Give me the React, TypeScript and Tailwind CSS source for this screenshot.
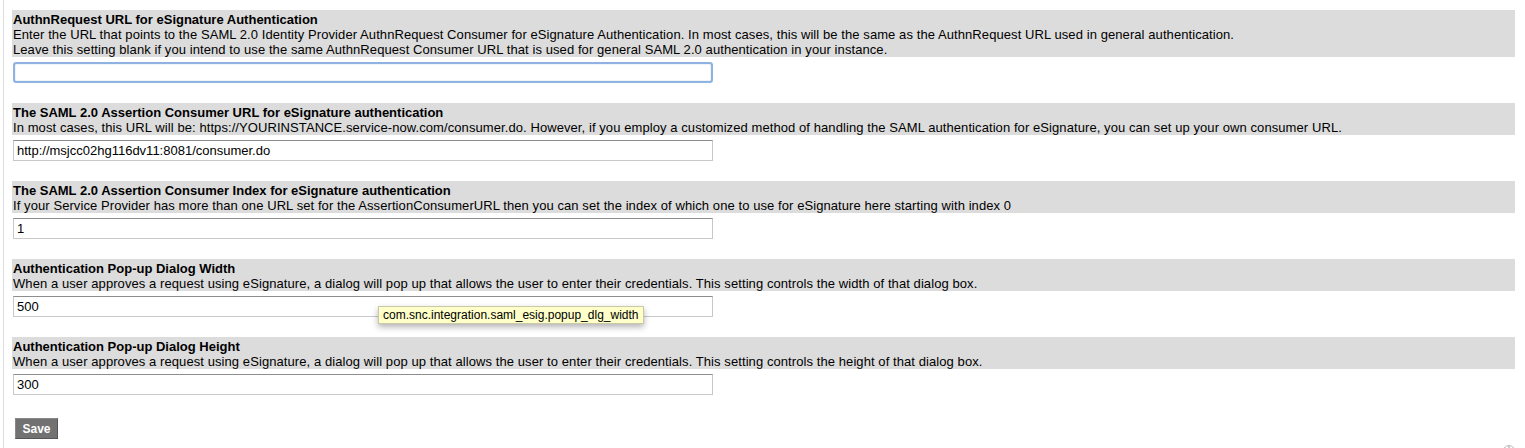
const settings = [
  {
    title: "AuthnRequest URL for eSignature Authentication",
    desc: [
      "Enter the URL that points to the SAML 2.0 Identity Provider AuthnRequest Consumer for eSignature Authentication. In most cases, this will be the same as the AuthnRequest URL used in general authentication.",
      "Leave this setting blank if you intend to use the same AuthnRequest Consumer URL that is used for general SAML 2.0 authentication in your instance.",
    ],
    value: "",
    focused: true,
  },
  {
    title: "The SAML 2.0 Assertion Consumer URL for eSignature authentication",
    desc: [
      "In most cases, this URL will be: https://YOURINSTANCE.service-now.com/consumer.do. However, if you employ a customized method of handling the SAML authentication for eSignature, you can set up your own consumer URL.",
    ],
    value: "http://msjcc02hg116dv11:8081/consumer.do",
  },
  {
    title: "The SAML 2.0 Assertion Consumer Index for eSignature authentication",
    desc: [
      "If your Service Provider has more than one URL set for the AssertionConsumerURL then you can set the index of which one to use for eSignature here starting with index 0",
    ],
    value: "1",
  },
  {
    title: "Authentication Pop-up Dialog Width",
    desc: [
      "When a user approves a request using eSignature, a dialog will pop up that allows the user to enter their credentials. This setting controls the width of that dialog box.",
    ],
    value: "500",
    tooltip: "com.snc.integration.saml_esig.popup_dlg_width",
  },
  {
    title: "Authentication Pop-up Dialog Height",
    desc: [
      "When a user approves a request using eSignature, a dialog will pop up that allows the user to enter their credentials. This setting controls the height of that dialog box.",
    ],
    value: "300",
  },
];

function Setting({ s }: { s: (typeof settings)[number] }) {
  return (
    <div className="mb-[20px]">
      {/* Label band */}
      <div className="bg-[#dcdcdc] pt-[2px] pl-[1px] leading-[15px]">
        <div className="font-bold">{s.title}</div>
        {s.desc.map((d, i) => (
          <div key={i} className="whitespace-nowrap tracking-[0.08px]">
            {d}
          </div>
        ))}
      </div>

      {/* Field */}
      <div className="relative mt-[5px] ml-[1px] w-[700px]">
        {s.focused ? (
          <div className="h-[21px] rounded-[3px] border-2 border-[#8fb3e0] bg-white shadow-[inset_0_0_1px_#5d8fd0]" />
        ) : (
          <div className="h-[21px] border border-[#c8c8c8] border-t-[#8e8e8e] bg-white pl-[3px] leading-[19px]">
            {s.value}
          </div>
        )}
        {s.tooltip && (
          <div className="absolute left-[365px] top-[10px] z-10 border border-[#c9c9a8] bg-[#ffffca] px-[4px] text-[12px] leading-[16px] whitespace-nowrap shadow-[0_3px_6px_rgba(0,0,0,0.3)]">
            {s.tooltip}
          </div>
        )}
      </div>
    </div>
  );
}

export default function App() {
  return (
    <div className="relative h-[448px] overflow-hidden bg-white pl-[3px] font-['Liberation_Sans',Arial,sans-serif] text-[13px] text-black">
      <div className="h-full border-l border-[#dddddd] pl-[8px] pr-[10px] pt-[10px]">
        {settings.map((s, i) => (
          <Setting key={i} s={s} />
        ))}

        <button className="ml-[3px] mt-[3px] h-[21px] w-[43px] border border-[#555] border-t-[#888] border-l-[#888] bg-[#727272] text-[12px] font-bold text-white">
          Save
        </button>
      </div>

      {/* partial widget peeking at bottom right */}
      <svg className="absolute left-[1503px] top-[443px]" width="12" height="6" viewBox="0 0 12 6">
        <path d="M1 5 Q6 0 11 5" fill="none" stroke="#b8b8b8" strokeWidth="1" />
        <path d="M6 3 V6" stroke="#999" strokeWidth="1" />
      </svg>
    </div>
  );
}
